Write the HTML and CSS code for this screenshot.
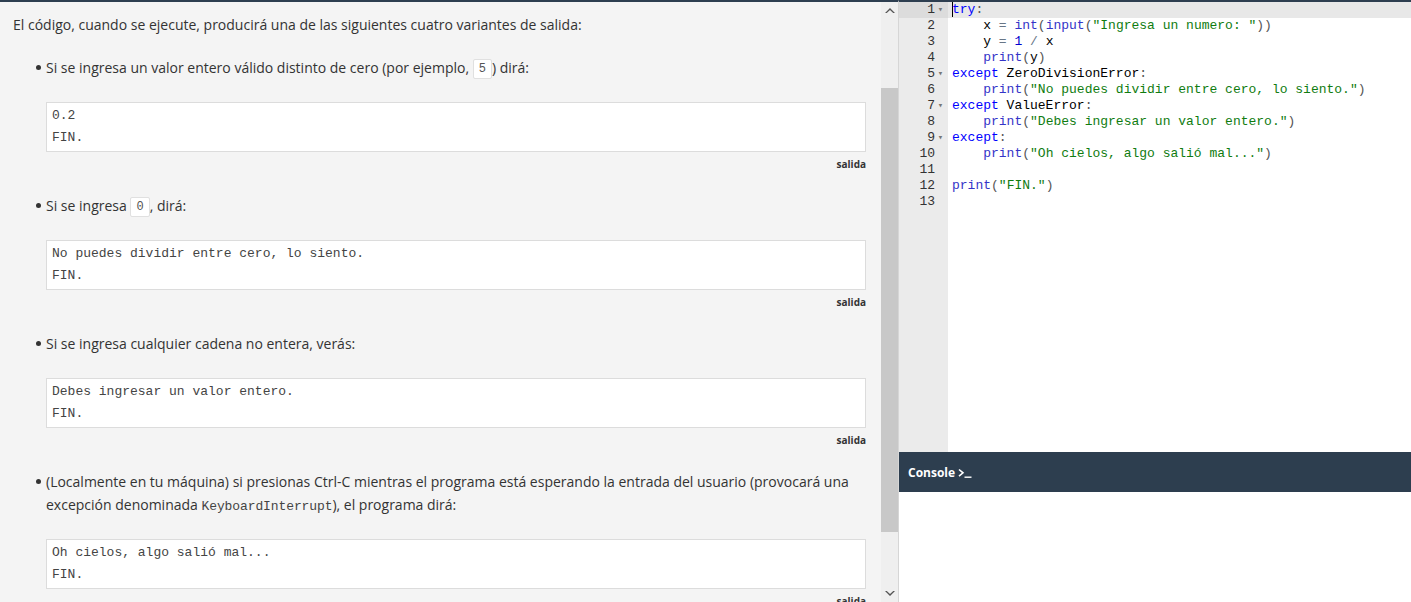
FILE: index.html
```html
<!DOCTYPE html>
<html lang="es">
<head>
<meta charset="utf-8">
<title>Excepciones</title>
<link rel="stylesheet" href="styles.css">
</head>
<body>
<div class="app">
  <section class="lesson">
    <div class="lesson-body">
      <p class="intro">El código, cuando se ejecute, producirá una de las siguientes cuatro variantes de salida:</p>
      <ul class="cases">
        <li>
          <div class="case-text">Si se ingresa un valor entero válido distinto de cero (por ejemplo, <code class="chip">5</code>) dirá:</div>
          <pre class="out">0.2
FIN.</pre>
          <div class="out-label">salida</div>
        </li>
        <li>
          <div class="case-text">Si se ingresa <code class="chip">0</code>, dirá:</div>
          <pre class="out">No puedes dividir entre cero, lo siento.
FIN.</pre>
          <div class="out-label">salida</div>
        </li>
        <li>
          <div class="case-text">Si se ingresa cualquier cadena no entera, verás:</div>
          <pre class="out">Debes ingresar un valor entero.
FIN.</pre>
          <div class="out-label">salida</div>
        </li>
        <li>
          <div class="case-text">(Localmente en tu máquina) si presionas Ctrl-C mientras el programa está esperando la entrada del usuario (provocará una excepción denominada <code class="plain">KeyboardInterrupt</code>), el programa dirá:</div>
          <pre class="out">Oh cielos, algo salió mal...
FIN.</pre>
          <div class="out-label">salida</div>
        </li>
      </ul>
    </div>
    <div class="scrollbar">
      <div class="sb-btn"><svg width="10" height="7" viewBox="0 0 10 7"><path d="M0 6 L5 1 L10 6 L8.2 6 L5 2.9 L1.8 6 Z" fill="#555"/></svg></div>
      <div class="sb-track">
        <div class="sb-gap-top"></div>
        <div class="sb-thumb"></div>
        <div class="sb-gap-bottom"></div>
      </div>
      <div class="sb-btn"><svg width="10" height="7" viewBox="0 0 10 7"><path d="M0 1 L5 6 L10 1 L8.2 1 L5 4.1 L1.8 1 Z" fill="#555"/></svg></div>
    </div>
  </section>
  <section class="ide">
    <div class="editor">
      <div class="gutter">
        <div class="gl active">1<span class="fold">▾</span></div>
        <div class="gl">2<span class="fold"></span></div>
        <div class="gl">3<span class="fold"></span></div>
        <div class="gl">4<span class="fold"></span></div>
        <div class="gl">5<span class="fold">▾</span></div>
        <div class="gl">6<span class="fold"></span></div>
        <div class="gl">7<span class="fold">▾</span></div>
        <div class="gl">8<span class="fold"></span></div>
        <div class="gl">9<span class="fold">▾</span></div>
        <div class="gl">10<span class="fold"></span></div>
        <div class="gl">11<span class="fold"></span></div>
        <div class="gl">12<span class="fold"></span></div>
        <div class="gl">13<span class="fold"></span></div>
      </div>
      <div class="code">
        <div class="cl active"><span class="cursor"></span><span class="kw">try</span><span class="pn">:</span></div>
        <div class="cl">    x <span class="op">=</span> <span class="fn">int</span><span class="pn">(</span><span class="fn">input</span><span class="pn">(</span><span class="st">"Ingresa un numero: "</span><span class="pn">))</span></div>
        <div class="cl">    y <span class="op">=</span> <span class="nm">1</span> <span class="op">/</span> x</div>
        <div class="cl">    <span class="fn">print</span><span class="pn">(</span>y<span class="pn">)</span></div>
        <div class="cl"><span class="kw">except</span> ZeroDivisionError<span class="pn">:</span></div>
        <div class="cl">    <span class="fn">print</span><span class="pn">(</span><span class="st">"No puedes dividir entre cero, lo siento."</span><span class="pn">)</span></div>
        <div class="cl"><span class="kw">except</span> ValueError<span class="pn">:</span></div>
        <div class="cl">    <span class="fn">print</span><span class="pn">(</span><span class="st">"Debes ingresar un valor entero."</span><span class="pn">)</span></div>
        <div class="cl"><span class="kw">except</span><span class="pn">:</span></div>
        <div class="cl">    <span class="fn">print</span><span class="pn">(</span><span class="st">"Oh cielos, algo salió mal..."</span><span class="pn">)</span></div>
        <div class="cl"> </div>
        <div class="cl"><span class="fn">print</span><span class="pn">(</span><span class="st">"FIN."</span><span class="pn">)</span></div>
        <div class="cl"> </div>
      </div>
    </div>
    <div class="console-bar">
      <span class="console-title">Console</span>
      <svg class="console-icon" width="14" height="10" viewBox="0 0 14 10"><path d="M1 1.5 L5 4.8 L1 8.1" fill="none" stroke="#fff" stroke-width="1.6"/><path d="M6.5 9.2 H13.5" stroke="#fff" stroke-width="1.4"/></svg>
    </div>
    <div class="console-out"></div>
  </section>
</div>
</body>
</html>
```

FILE: styles.css
```css
* { box-sizing: border-box; }
html, body { margin: 0; padding: 0; }
body {
  width: 1411px;
  height: 602px;
  overflow: hidden;
  background: #fff;
  font-family: "Open Sans", "Liberation Sans", sans-serif;
  color: #333;
}
.app {
  display: flex;
  height: 602px;
}

/* ---------- lesson panel ---------- */
.lesson {
  width: 899px;
  flex: none;
  display: flex;
  background: #f4f4f4;
  border-top: 2px solid #2d3e50;
  border-right: 1px solid #d6d6d6;
  overflow: hidden;
}
.lesson-body {
  width: 881px;
  flex: none;
  padding: 11px 15px 0 13px;
  font-size: 14px;
  line-height: 23px;
}
.intro { margin: 0; }
.cases {
  list-style: none;
  margin: 20px 0 0 0;
  padding: 0 0 0 33px;
}
.cases li {
  position: relative;
  margin-bottom: 24px;
}
.cases li::before {
  content: "";
  position: absolute;
  left: -10px;
  top: 9px;
  width: 5px;
  height: 5px;
  border-radius: 50%;
  background: #333;
}
.chip {
  display: inline-block;
  font-family: "Liberation Mono", monospace;
  font-size: 12px;
  line-height: 18px;
  padding: 0 5px;
  background: #fff;
  border: 1px solid #e0e0e0;
  border-radius: 2px;
  color: #555;
  vertical-align: 1px;
}
.plain {
  font-family: "Liberation Mono", monospace;
  font-size: 13px;
  line-height: 1;
  color: #444;
  letter-spacing: -0.1px;
}
.out {
  margin: 23px 0 0 0;
  background: #fff;
  border: 1px solid #dcdcdc;
  padding: 2px 5px;
  font-family: "Liberation Mono", monospace;
  font-size: 13px;
  line-height: 22px;
  color: #444;
  white-space: pre;
}
.out-label {
  margin-top: 6px;
  text-align: right;
  font-size: 10px;
  font-weight: 700;
  line-height: 12px;
  color: #333;
}

/* scrollbar */
.scrollbar {
  width: 17px;
  flex: none;
  display: flex;
  flex-direction: column;
  background: #efefef;
}
.sb-btn {
  height: 17px;
  display: flex;
  align-items: center;
  justify-content: center;
  flex: none;
}
.sb-track {
  flex: 1;
  display: flex;
  flex-direction: column;
}
.sb-gap-top { height: 69px; flex: none; }
.sb-thumb { height: 444px; flex: none; background: #c8c8c8; }
.sb-gap-bottom { flex: 1; }

/* ---------- ide ---------- */
.ide {
  flex: 1;
  display: flex;
  flex-direction: column;
  min-width: 0;
}
.editor {
  height: 452px;
  flex: none;
  display: flex;
  background: #fff;
  border-top: 2px solid #2d3e50;
}
.gutter {
  width: 49px;
  flex: none;
  background: #ebebeb;
  font-family: "Liberation Mono", monospace;
  font-size: 13px;
  line-height: 16px;
  color: #333;
}
.gl {
  height: 16px;
  display: flex;
  justify-content: flex-end;
  padding-right: 2px;
}
.gl.active { background: #dcdcdc; }
.fold {
  width: 11px;
  flex: none;
  font-size: 9px;
  color: #777;
  text-align: center;
}
.code {
  flex: 1;
  font-family: "Liberation Mono", monospace;
  font-size: 13px;
  line-height: 16px;
  color: #000;
}
.cl { height: 16px; padding-left: 4px; white-space: pre; }
.cl.active { background: #e8e8e8; }
.cursor {
  display: inline-block;
  width: 0;
  height: 15px;
  border-left: 1px solid #000;
  vertical-align: top;
  margin-right: -1px;
}
.kw { color: #0000ff; }
.fn { color: #3434c8; }
.st { color: #107c10; }
.nm { color: #0000cd; }
.op { color: #687687; }
.pn { color: #555; }

.console-bar {
  height: 40px;
  flex: none;
  background: #2d3e4f;
  display: flex;
  align-items: center;
  padding-left: 9px;
  color: #fff;
}
.console-title {
  font-size: 12px;
  font-weight: 700;
}
.console-icon { margin-left: 3px; margin-top: 1px; }
.console-out { flex: 1; background: #fff; }
```
